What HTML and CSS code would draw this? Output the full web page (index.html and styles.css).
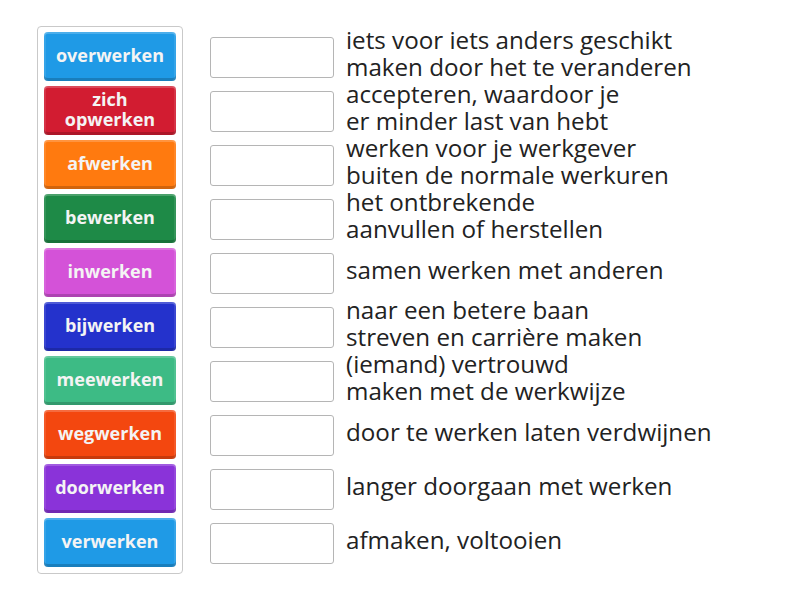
FILE: index.html
```html
<!DOCTYPE html>
<html lang="nl">
<head>
  <meta charset="UTF-8" />
  <title>Werken</title>
  <link rel="stylesheet" href="styles.css">
</head>
<body>
  <div class="board">
    <div class="tiles">
      <div class="tile c-blue">overwerken</div>
      <div class="tile c-red">zich<br>opwerken</div>
      <div class="tile c-orange">afwerken</div>
      <div class="tile c-green">bewerken</div>
      <div class="tile c-pink">inwerken</div>
      <div class="tile c-navy">bijwerken</div>
      <div class="tile c-mint">meewerken</div>
      <div class="tile c-flame">wegwerken</div>
      <div class="tile c-purple">doorwerken</div>
      <div class="tile c-blue">verwerken</div>
    </div>

    <div class="rows">
      <div class="row"><div class="slot"></div><p>iets voor iets anders geschikt<br>maken door het te veranderen</p></div>
      <div class="row"><div class="slot"></div><p>accepteren, waardoor je<br>er minder last van hebt</p></div>
      <div class="row"><div class="slot"></div><p>werken voor je werkgever<br>buiten de normale werkuren</p></div>
      <div class="row"><div class="slot"></div><p>het ontbrekende<br>aanvullen of herstellen</p></div>
      <div class="row"><div class="slot"></div><p>samen werken met anderen</p></div>
      <div class="row"><div class="slot"></div><p>naar een betere baan<br>streven en carrière maken</p></div>
      <div class="row"><div class="slot"></div><p>(iemand) vertrouwd<br>maken met de werkwijze</p></div>
      <div class="row"><div class="slot"></div><p>door te werken laten verdwijnen</p></div>
      <div class="row"><div class="slot"></div><p>langer doorgaan met werken</p></div>
      <div class="row"><div class="slot"></div><p>afmaken, voltooien</p></div>
    </div>
  </div>
</body>
</html>
```

FILE: styles.css
```css
body {
  margin: 0;
  background: #fff;
  font-family: 'Open Sans', sans-serif;
  color: #222;
}
.board {
  display: flex;
  align-items: flex-start;
  padding: 26px 0 0 37px;
}
.tiles {
  display: flex;
  flex-direction: column;
  gap: 5px;
  width: 132px;
  padding: 5px 6px 6px 6px;
  border: 1px solid #c9c9c9;
  border-radius: 4px;
}
.tile {
  height: 49px;
  box-sizing: border-box;
  padding-bottom: 3px;
  display: flex;
  align-items: center;
  justify-content: center;
  text-align: center;
  border-radius: 4px;
  color: #f4f4f4;
  font-weight: 700;
  font-size: 18px;
  line-height: 20px;
  box-shadow: inset 0 -3px 0 rgba(0,0,0,.18), inset 0 2px 0 rgba(255,255,255,.2), inset 2px 0 0 rgba(255,255,255,.1), inset -2px 0 0 rgba(255,255,255,.1);
}
.c-blue { background: #1f9ae6; }
.c-red { background: #d21c31; }
.c-orange { background: #ff7a0f; }
.c-green { background: #1e8a47; }
.c-pink { background: #d452d8; }
.c-navy { background: #2432cc; }
.c-mint { background: #3dbb85; }
.c-flame { background: #f3470f; }
.c-purple { background: #8a33d9; }
.rows {
  display: flex;
  flex-direction: column;
  gap: 13px;
  margin: 11px 0 0 27px;
}
.row {
  display: flex;
  align-items: center;
  height: 41px;
}
.slot {
  width: 122px;
  height: 39px;
  border: 1px solid #b5b5b5;
  border-radius: 3px;
  flex-shrink: 0;
}
.row p {
  margin: -9px 0 0 12px;
  font-size: 24.2px;
  line-height: 27px;
  white-space: nowrap;
}
```
